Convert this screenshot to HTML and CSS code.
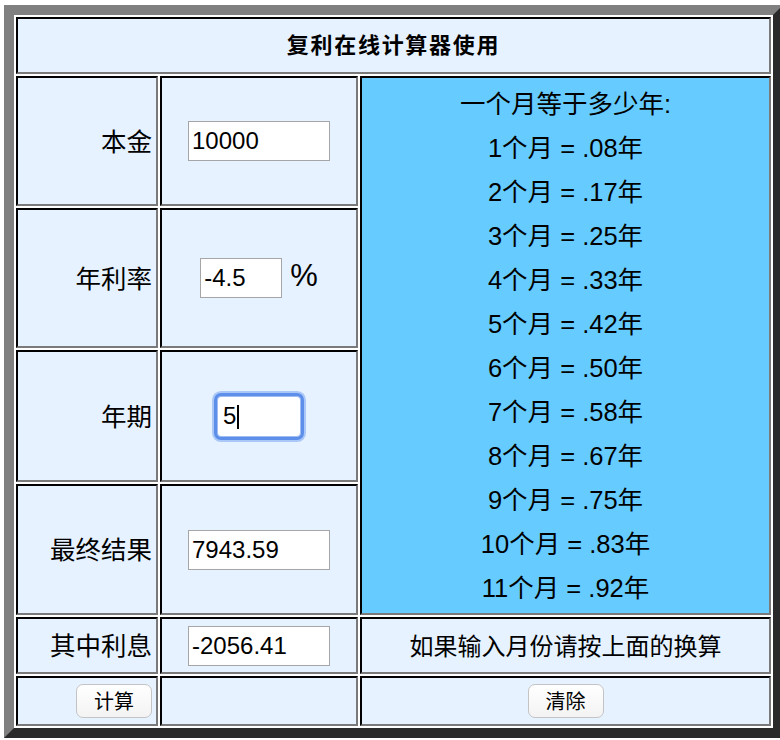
FILE: index.html
```html
<!DOCTYPE html>
<html lang="zh-CN">
<head>
<meta charset="utf-8">
<title>复利在线计算器使用</title>
<link rel="stylesheet" href="styles.css">
</head>
<body>
<table class="calc">
  <colgroup>
    <col class="c1"><col class="c2"><col class="c3">
  </colgroup>
  <tr class="r-title">
    <td colspan="3" class="title">复利在线计算器使用</td>
  </tr>
  <tr class="r1">
    <td class="label">本金</td>
    <td class="field"><input class="inp wide" type="text" value="10000"></td>
    <td class="months" rowspan="4">
      <div>一个月等于多少年:</div>
      <div>1个月 = .08年</div>
      <div>2个月 = .17年</div>
      <div>3个月 = .25年</div>
      <div>4个月 = .33年</div>
      <div>5个月 = .42年</div>
      <div>6个月 = .50年</div>
      <div>7个月 = .58年</div>
      <div>8个月 = .67年</div>
      <div>9个月 = .75年</div>
      <div>10个月 = .83年</div>
      <div>11个月 = .92年</div>
    </td>
  </tr>
  <tr class="r2">
    <td class="label">年利率</td>
    <td class="field"><input class="inp narrow" type="text" value="-4.5"><span class="pct">%</span></td>
  </tr>
  <tr class="r3">
    <td class="label">年期</td>
    <td class="field"><span class="focus-wrap"><input class="inp narrow focused" type="text" value="5"><span class="caret"></span></span></td>
  </tr>
  <tr class="r4">
    <td class="label">最终结果</td>
    <td class="field"><input class="inp wide" type="text" value="7943.59"></td>
  </tr>
  <tr class="r5">
    <td class="label">其中利息</td>
    <td class="field"><input class="inp wide" type="text" value="-2056.41"></td>
    <td class="note">如果输入月份请按上面的换算</td>
  </tr>
  <tr class="r6">
    <td class="label btn-cell"><button class="btn" type="button">计算</button></td>
    <td class="field"></td>
    <td class="center"><button class="btn" type="button">清除</button></td>
  </tr>
</table>
</body>
</html>
```

FILE: styles.css
```css
html, body {
  margin: 0;
  padding: 0;
  overflow: hidden;
  background: #ffffff;
}
body {
  padding: 5px 0 0 4px;
  font-family: "Liberation Sans", "Noto Sans CJK SC", sans-serif;
  color: #000;
}
.calc {
  box-sizing: border-box;
  width: 779px;
  table-layout: fixed;
  border-collapse: separate;
  border-spacing: 2px;
  border-width: 10px;
  border-style: solid;
  border-color: #808080 #2a2a2a #2a2a2a #808080;
  background: #ffffff;
}
.c1 { width: 142px; }
.c2 { width: 198px; }
.c3 { width: 411px; }
.calc td {
  box-sizing: border-box;
  border-width: 2px;
  border-style: solid;
  border-color: #000 #7a7a7a #7a7a7a #000;
  background: #e6f2ff;
  padding: 0;
  vertical-align: middle;
  font-size: 24px;
}
.r-title { height: 57px; }
.r1 { height: 130px; }
.r2 { height: 140px; }
.r3 { height: 132px; }
.r4 { height: 131px; }
.r5 { height: 57px; }
.r6 { height: 50px; }

.calc td.title {
  text-align: center;
  font-weight: bold;
  font-size: 22px;
  letter-spacing: 1.7px;
  padding-bottom: 5px;
}
.calc td.label {
  text-align: right;
  padding-right: 4px;
  padding-bottom: 4px;
  font-size: 25.5px;
}
.calc td.label.btn-cell {
  padding-bottom: 0;
}
.calc td.field {
  text-align: center;
}
.calc td.months {
  background: #66ccff;
  text-align: center;
  line-height: 44px;
  font-size: 25.5px;
}
.calc td.note,
.calc td.center {
  text-align: center;
}
.calc td.note {
  padding-bottom: 3px;
}
.inp {
  box-sizing: border-box;
  height: 40px;
  border: 1px solid #a6a6a6;
  background: #fff;
  padding: 0 3px;
  margin: 0;
  font-family: "Liberation Sans", "Noto Sans CJK SC", sans-serif;
  font-size: 24px;
  color: #000;
  vertical-align: middle;
  outline: none;
}
.wide { width: 142px; }
.narrow { width: 82px; }
.pct {
  display: inline-block;
  font-size: 31px;
  margin-left: 8px;
  vertical-align: middle;
  position: relative;
  top: -2px;
}
.focus-wrap {
  display: inline-block;
  position: relative;
  vertical-align: middle;
}
.inp.focused {
  width: 84px;
  height: 41px;
  border: 1px solid #9dbdf3;
  border-radius: 4px;
  box-shadow: 0 0 0 3px #5d8fea, 0 0 0 5px rgba(120, 165, 240, 0.55);
  padding-left: 5px;
  vertical-align: top;
}
.caret {
  position: absolute;
  left: 20px;
  top: 9px;
  width: 2px;
  height: 24px;
  background: #000;
}
.btn {
  box-sizing: border-box;
  width: 76px;
  height: 34px;
  margin: 0;
  border: 1px solid #c4c4c4;
  border-radius: 7px;
  background: linear-gradient(#ffffff, #f3f3f3);
  font-family: "Noto Sans CJK SC", sans-serif;
  font-size: 20px;
  color: #000;
  padding: 0;
  line-height: 30px;
  vertical-align: middle;
}
```
